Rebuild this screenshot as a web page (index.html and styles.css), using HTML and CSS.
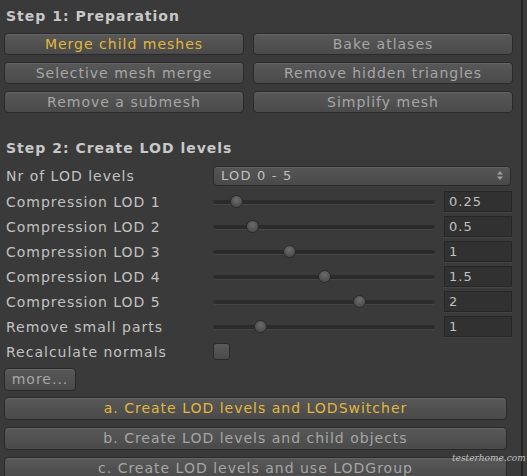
FILE: index.html
```html
<!DOCTYPE html>
<html>
<head>
<meta charset="utf-8">
<link rel="stylesheet" href="styles.css">
</head>
<body>
<div class="frame">
  <div class="panel">
    <div class="title t1">Step 1: Preparation</div>
    <div class="btn-grid">
      <div class="btn active">Merge child meshes</div>
      <div class="btn">Bake atlases</div>
      <div class="btn">Selective mesh merge</div>
      <div class="btn">Remove hidden triangles</div>
      <div class="btn">Remove a submesh</div>
      <div class="btn">Simplify mesh</div>
    </div>

    <div class="title t2">Step 2: Create LOD levels</div>
    <div class="props">
      <div class="row first">
        <div class="label">Nr of LOD levels</div>
        <div class="dropdown"><span>LOD 0 - 5</span>
          <svg class="arrows" width="6" height="9" viewBox="0 0 6 9"><path d="M3 0 L6 3.5 H0 Z M3 9 L6 5.5 H0 Z" fill="#a0a0a0"/></svg>
        </div>
      </div>
      <div class="row">
        <div class="label">Compression LOD 1</div>
        <div class="slider"><div class="track"></div><div class="thumb" style="left: 23px"></div></div>
        <div class="field">0.25</div>
      </div>
      <div class="row">
        <div class="label">Compression LOD 2</div>
        <div class="slider"><div class="track"></div><div class="thumb" style="left: 39px"></div></div>
        <div class="field">0.5</div>
      </div>
      <div class="row">
        <div class="label">Compression LOD 3</div>
        <div class="slider"><div class="track"></div><div class="thumb" style="left: 76px"></div></div>
        <div class="field">1</div>
      </div>
      <div class="row">
        <div class="label">Compression LOD 4</div>
        <div class="slider"><div class="track"></div><div class="thumb" style="left: 111px"></div></div>
        <div class="field">1.5</div>
      </div>
      <div class="row">
        <div class="label">Compression LOD 5</div>
        <div class="slider"><div class="track"></div><div class="thumb" style="left: 146px"></div></div>
        <div class="field">2</div>
      </div>
      <div class="row">
        <div class="label">Remove small parts</div>
        <div class="slider"><div class="track"></div><div class="thumb" style="left: 47px"></div></div>
        <div class="field">1</div>
      </div>
      <div class="row">
        <div class="label">Recalculate normals</div>
        <div class="checkbox"></div>
      </div>
    </div>

    <div class="btn more">more...</div>
    <div class="actions">
      <div class="btn wide active">a. Create LOD levels and LODSwitcher</div>
      <div class="btn wide">b. Create LOD levels and child objects</div>
      <div class="btn wide">c. Create LOD levels and use LODGroup</div>
    </div>
  </div>
  <div class="edge"></div>
  <div class="watermark">testerhome.com</div>
</div>
</body>
</html>
```
FILE: styles.css
```css
* { box-sizing: border-box; }
html, body {
  margin: 0;
  padding: 0;
  background: #3a3a3a;
  width: 527px;
  height: 476px;
  overflow: hidden;
}
body {
  font-family: "DejaVu Sans", "Liberation Sans", sans-serif;
  font-size: 14px;
  letter-spacing: 1px;
  color: #c2c2c2;
}
.frame {
  position: relative;
  display: flex;
  height: 476px;
}
.panel {
  width: 521px;
  padding-left: 4px;
  flex: none;
}
.edge {
  flex: 1;
  border-left: 2px solid #262626;
  background: #3b3b3b;
}
.watermark {
  position: absolute;
  left: 452px;
  top: 453px;
  font-family: "DejaVu Serif", serif;
  font-style: italic;
  font-size: 9px;
  letter-spacing: 0;
  color: #d8d8d8;
  opacity: 0.85;
}
.title {
  font-weight: bold;
  color: #c8c8c8;
  height: 20px;
  line-height: 20px;
  padding-left: 2px;
}
.t1 { margin-top: 6px; margin-bottom: 7px; }
.t2 { margin-top: 25px; margin-bottom: 5px; }

.btn-grid {
  display: grid;
  grid-template-columns: 240px 260px;
  column-gap: 9px;
  row-gap: 7px;
}
.btn {
  height: 22px;
  line-height: 20px;
  text-align: center;
  color: #a6a6a6;
  background: linear-gradient(#585858, #4a4a4a);
  border: 1px solid #2a2a2a;
  border-radius: 4px;
  box-shadow: inset 0 1px 0 rgba(255,255,255,0.08);
  white-space: nowrap;
}
.btn.active { color: #e2b73a; }

.props { display: flex; flex-direction: column; }
.row {
  display: flex;
  align-items: center;
  height: 25px;
}
.row.first { margin-bottom: 1px; }
.label {
  width: 209px;
  flex: none;
  padding-left: 2px;
  white-space: nowrap;
}
.dropdown {
  width: 298px;
  height: 20px;
  display: flex;
  align-items: center;
  justify-content: space-between;
  padding: 0 7px 0 7px;
  background: linear-gradient(#565656, #494949);
  border: 1px solid #2a2a2a;
  border-radius: 4px;
  box-shadow: inset 0 1px 0 rgba(255,255,255,0.07);
  color: #c0c0c0;
  font-size: 13px;
  letter-spacing: 1.2px;
}
.slider {
  position: relative;
  width: 222px;
  height: 21px;
  flex: none;
}
.track {
  position: absolute;
  left: 0;
  right: 0;
  top: 9px;
  height: 4px;
  border-radius: 2px;
  background: #2b2b2b;
  box-shadow: 0 1px 0 rgba(255,255,255,0.06);
}
.thumb {
  position: absolute;
  top: 4px;
  width: 13px;
  height: 13px;
  margin-left: -6px;
  border-radius: 50%;
  background: radial-gradient(circle at 50% 35%, #6c6c6c, #4e4e4e 70%);
  border: 1px solid #2a2a2a;
}
.field {
  margin-left: 9px;
  width: 68px;
  height: 21px;
  line-height: 19px;
  padding-left: 4px;
  background: #313131;
  border: 1px solid #262626;
  box-shadow: 0 1px 0 rgba(255,255,255,0.05);
  color: #c0c0c0;
  font-size: 13px;
}
.checkbox {
  width: 17px;
  height: 17px;
  border-radius: 3px;
  background: linear-gradient(#5a5a5a, #4a4a4a);
  border: 1px solid #2a2a2a;
}
.more {
  width: 72px;
  margin-top: 4px;
  height: 23px;
}
.actions {
  display: flex;
  flex-direction: column;
  gap: 7px;
  margin-top: 6px;
}
.btn.wide {
  width: 503px;
  height: 23px;
  line-height: 21px;
}
```
